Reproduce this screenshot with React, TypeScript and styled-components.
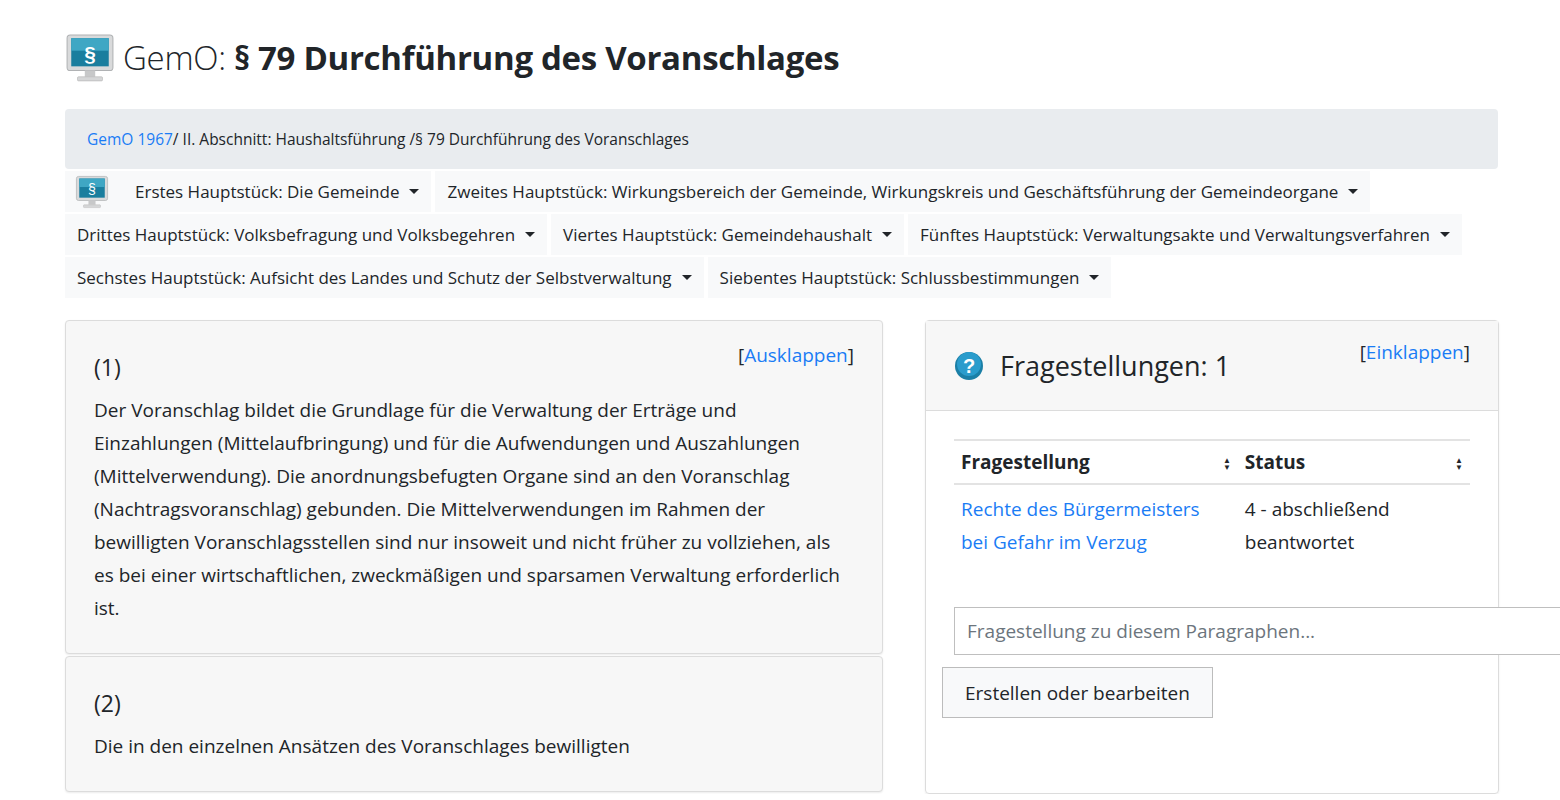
import styled, { createGlobalStyle } from 'styled-components';

const Global = createGlobalStyle`
  body { margin: 0; background: #fff; font-family: "Open Sans", "Noto Sans", sans-serif; color: #212529; overflow: hidden; }
  a { color: #1a7cf5; text-decoration: none; }
`;

const Page = styled.div`
  padding: 33px 62px 0 65px;
`;

const Title = styled.h1`
  display: flex;
  align-items: center;
  gap: 8px;
  margin: 0 0 26px;
  font-size: 33px;
  font-weight: 700;
  line-height: 1.2;
  letter-spacing: -0.3px;
  span { font-weight: 300; }
`;

const Breadcrumb = styled.div`
  background: #e9ecef;
  border-radius: 4px;
  padding: 19px 22px;
  font-size: 15.5px;
  height: 60px;
  box-sizing: border-box;
  margin-bottom: 2px;
`;

const Nav = styled.div`
  display: flex;
  flex-wrap: wrap;
  gap: 2px 0;
`;

const NavItem = styled.div`
  background: #f8f9fa;
  display: flex;
  align-items: center;
  height: 41px;
  padding: 0 12px;
  font-size: 17px;
  margin-right: 4px;
  &::after {
    content: '';
    margin-left: 10px;
    border-top: 5px solid #212529;
    border-left: 5px solid transparent;
    border-right: 5px solid transparent;
  }
`;

const Brand = styled.div`
  background: #f8f9fa;
  height: 41px;
  display: flex;
  align-items: center;
  padding: 0 14px 0 10px;
`;

const Columns = styled.div`
  display: grid;
  grid-template-columns: 818px 574px;
  gap: 42px;
  margin-top: 22px;
`;

const Card = styled.div`
  background: #f7f7f7;
  border: 1px solid #dcdcdc;
  border-radius: 4px;
  box-shadow: 0 1px 2px rgba(0,0,0,.08);
  padding: 22px 28px 28px;
  position: relative;
  margin-bottom: 2px;
  font-size: 19px;
  line-height: 33px;
`;

const Toggle = styled.a`
  position: absolute;
  top: 18px;
  right: 28px;
  font-size: 19px;
  color: #212529;
  b { color: #1a7cf5; font-weight: 400; }
`;

const Num = styled.div`
  font-size: 23px;
  margin: 8px 0 10px;
`;

const Side = styled.div`
  border: 1px solid #dcdcdc;
  border-radius: 4px;
  box-shadow: 0 1px 2px rgba(0,0,0,.08);
  position: relative;
`;

const SideHead = styled.div`
  background: #f7f7f7;
  border-bottom: 1px solid #dcdcdc;
  height: 89px;
  display: flex;
  align-items: center;
  gap: 16px;
  padding: 0 28px;
  font-size: 27px;
`;

const SideBody = styled.div`
  padding: 28px 28px 38px;
  position: relative;
`;

const Table = styled.table`
  width: 100%;
  border-collapse: collapse;
  font-size: 19px;
  th { text-align: left; font-weight: 700; border-top: 2px solid #e3e3e3; border-bottom: 2px solid #e3e3e3; padding: 8px 7px; }
  td { padding: 8px 7px; line-height: 33px; vertical-align: top; }
`;

const Sort = styled.span`
  float: right;
  font-size: 8px;
  line-height: 7px;
  margin-top: 7px;
  display: inline-flex;
  flex-direction: column;
`;

const Input = styled.input`
  margin-top: 40px;
  width: 640px;
  height: 48px;
  border: 1px solid #bfbfbf;
  box-sizing: border-box;
  padding: 0 12px;
  font: inherit;
  font-size: 19px;
  &::placeholder { color: #6c757d; }
`;

const Button = styled.button`
  display: block;
  margin: 12px 0 0 -12px;
  height: 51px;
  padding: 0 22px;
  background: #f8f9fa;
  border: 1px solid #bcbcbc;
  font: inherit;
  font-size: 19px;
  color: #212529;
`;

const Monitor = ({ s }: { s: number }) => (
  <svg width={s} height={s} viewBox="0 0 48 48">
    <rect x="2" y="2" width="44" height="34" rx="3" fill="#d9dadb" stroke="#b0b2b4" />
    <rect x="6" y="5" width="36" height="27" fill="#1a7e9e" />
    <rect x="6" y="5" width="36" height="12" fill="#3fa7c4" />
    <text x="24" y="27" textAnchor="middle" fill="#fff" fontSize="20" fontFamily="Liberation Sans, sans-serif">§</text>
    <rect x="19" y="36" width="10" height="6" fill="#c7c8c9" />
    <rect x="12" y="42" width="24" height="4" rx="1" fill="#d5d6d7" stroke="#aaa" strokeWidth=".5" />
  </svg>
);

const nav = [
  'Erstes Hauptstück: Die Gemeinde',
  'Zweites Hauptstück: Wirkungsbereich der Gemeinde, Wirkungskreis und Geschäftsführung der Gemeindeorgane',
  'Drittes Hauptstück: Volksbefragung und Volksbegehren',
  'Viertes Hauptstück: Gemeindehaushalt',
  'Fünftes Hauptstück: Verwaltungsakte und Verwaltungsverfahren',
  'Sechstes Hauptstück: Aufsicht des Landes und Schutz der Selbstverwaltung',
  'Siebentes Hauptstück: Schlussbestimmungen',
];

export default function App() {
  return (
    <Page>
      <Global />
      <Title><Monitor s={50} /><div><span>GemO: </span>§ 79 Durchführung des Voranschlages</div></Title>
      <Breadcrumb><a>GemO 1967</a>/ II. Abschnitt: Haushaltsführung /§ 79 Durchführung des Voranschlages</Breadcrumb>
      <Nav>
        <Brand><Monitor s={34} /></Brand>
        {nav.map(n => <NavItem key={n}>{n}</NavItem>)}
      </Nav>
      <Columns>
        <div>
          <Card>
            <Toggle>[<b>Ausklappen</b>]</Toggle>
            <Num>(1)</Num>
            Der Voranschlag bildet die Grundlage für die Verwaltung der Erträge und Einzahlungen (Mittelaufbringung) und für die Aufwendungen und Auszahlungen (Mittelverwendung). Die anordnungsbefugten Organe sind an den Voranschlag (Nachtragsvoranschlag) gebunden. Die Mittelverwendungen im Rahmen der bewilligten Voranschlagsstellen sind nur insoweit und nicht früher zu vollziehen, als es bei einer wirtschaftlichen, zweckmäßigen und sparsamen Verwaltung erforderlich ist.
          </Card>
          <Card>
            <Num>(2)</Num>
            Die in den einzelnen Ansätzen des Voranschlages bewilligten
          </Card>
        </div>
        <Side>
          <SideHead>
            <svg width="30" height="30" viewBox="0 0 30 30">
              <circle cx="15" cy="15" r="14" fill="#1b7fa6" />
              <circle cx="15" cy="13" r="12" fill="#2a9ccc" />
              <text x="15" y="22" textAnchor="middle" fill="#fff" fontSize="20" fontWeight="700" fontFamily="Liberation Sans, sans-serif">?</text>
            </svg>
            Fragestellungen: 1
            <Toggle>[<b>Einklappen</b>]</Toggle>
          </SideHead>
          <SideBody>
            <Table>
              <thead>
                <tr><th style={{ width: '55%' }}>Fragestellung<Sort><i>▲</i><i>▼</i></Sort></th><th>Status<Sort><i>▲</i><i>▼</i></Sort></th></tr>
              </thead>
              <tbody>
                <tr><td><a>Rechte des Bürgermeisters bei Gefahr im Verzug</a></td><td>4 - abschließend beantwortet</td></tr>
              </tbody>
            </Table>
            <Input placeholder="Fragestellung zu diesem Paragraphen..." />
            <Button>Erstellen oder bearbeiten</Button>
          </SideBody>
        </Side>
      </Columns>
    </Page>
  );
}
